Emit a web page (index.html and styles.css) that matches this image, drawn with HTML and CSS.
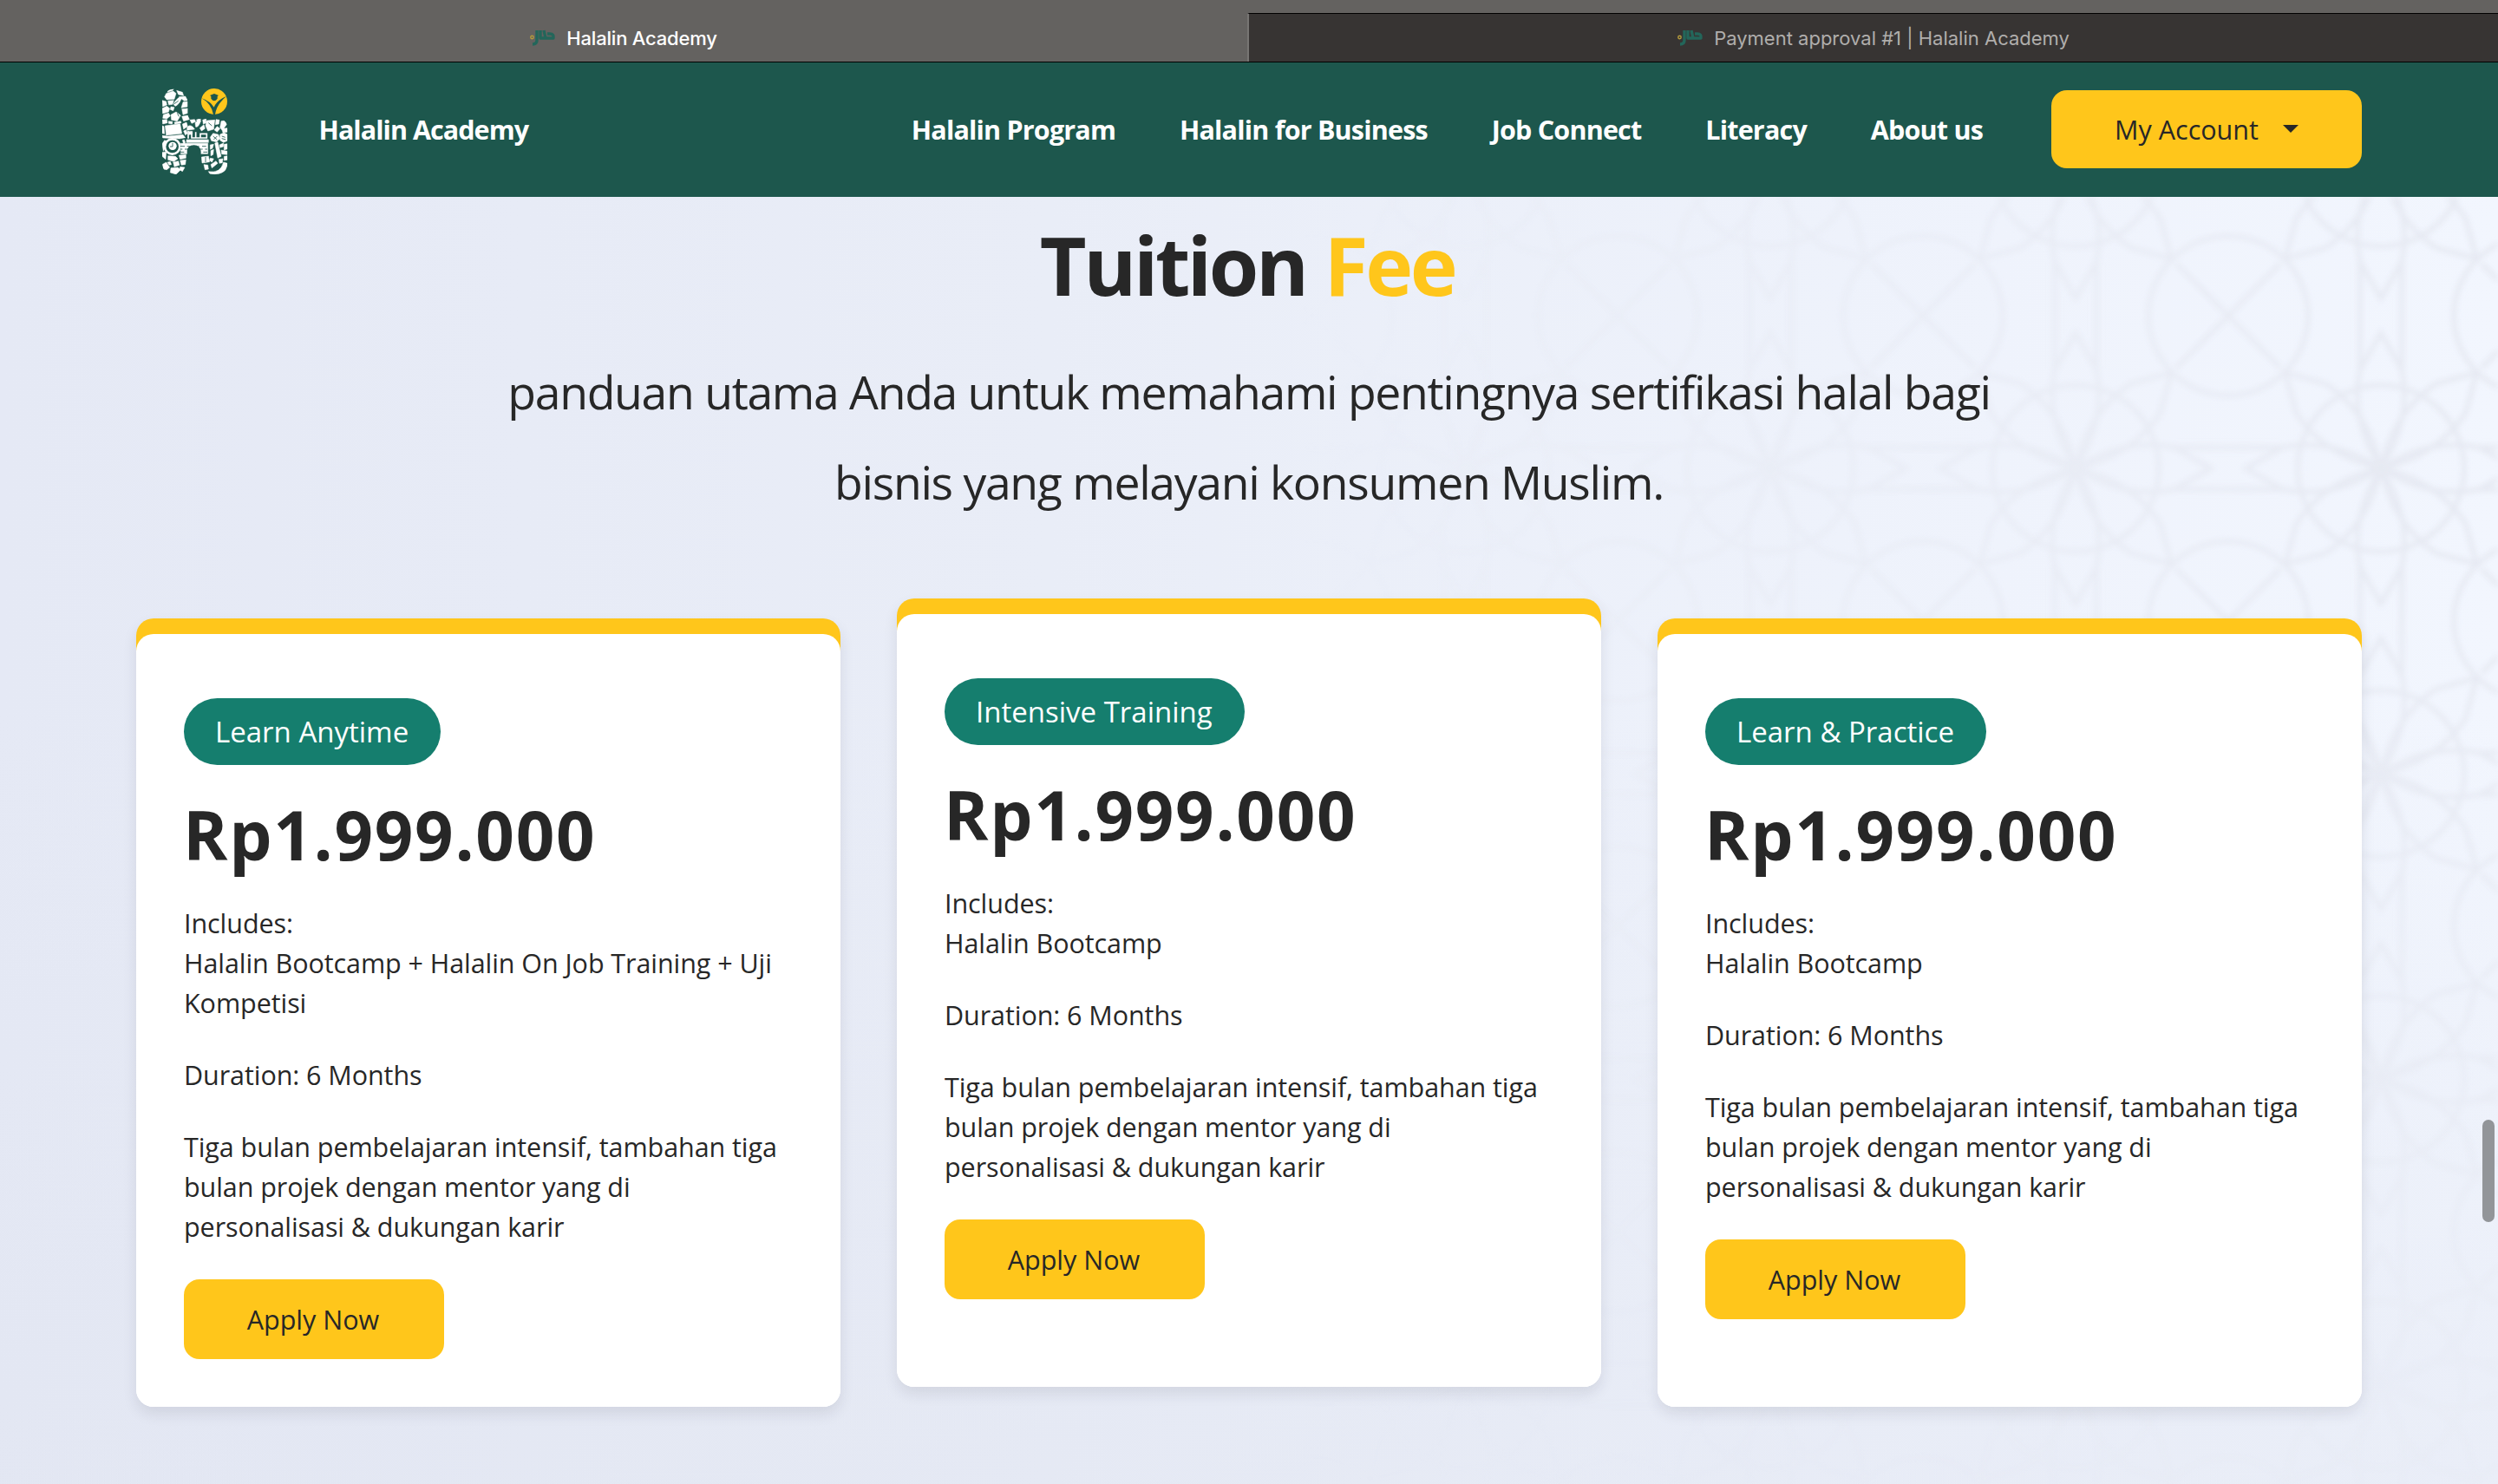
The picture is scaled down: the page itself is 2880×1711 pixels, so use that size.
FILE: index.html
```html
<!DOCTYPE html>
<html lang="id">
<head>
<meta charset="utf-8">
<title>Halalin Academy</title>
<link rel="stylesheet" href="styles.css">
</head>
<body>
<div class="tabs">
  <div class="tab tab-active">
    <svg class="favicon" viewBox="0 0 30 20"><path class="mark" d="M8 1v11q0 5-5 5M12 1v9h15q1-5-4-5h-3M16 1l2 9"/><circle cx="2.5" cy="9" r="1.7"/></svg>
    <span class="tab-title">Halalin Academy</span>
  </div>
  <div class="tab tab-idle">
    <svg class="favicon" viewBox="0 0 30 20"><path class="mark" d="M8 1v11q0 5-5 5M12 1v9h15q1-5-4-5h-3M16 1l2 9"/><circle cx="2.5" cy="9" r="1.7"/></svg>
    <span class="tab-title">Payment approval #1 | Halalin Academy</span>
  </div>
</div>

<header class="header">
  <svg class="logo" viewBox="0 0 300 345">
    <defs>
      <clipPath id="h-shape"><path d="M36 66A44 44 0 0 1 124 66V108Q126 126 146 126H226Q262 126 262 160V276Q262 318 218 318Q172 318 170 280V240Q168 217 146 217Q122 217 122 240V280Q118 318 80 318Q36 318 36 276Z"/></clipPath>
    </defs>
    <g clip-path="url(#h-shape)">
      <g fill="#fff" stroke="#fff" stroke-width="1.5" stroke-linejoin="round">
        <path d="M50 38l24-8 10 8-6 20-26 2-8-10zM56 26l20-3-4 5-18 6zM86 28l20 6 4 12-18-4zM94 50l22-2 8 14-12 2zM36 62l14 4 2 12-14 6zM56 64l20-2-4 14-14 2zM80 66q16-20 24-14-6 20-20 30-14-2-4-16zM108 68l16-2v18l-22 4zM36 90l16-8 10 8-4 12-20 6zM66 84l12 2-4 12-10-4zM40 112l18-6 6 10-12 10-14-2zM66 112l18-10 16 12-12 20-20-4zM104 92l22-2v16l-18 6zM104 118l20-4 6 14-20 6zM36 130l16-2 2 12-16 4zM58 134l14 2-2 8-12-2zM78 138l22-4 2 6-22 4z"/>
        <path d="M46 150l52-7 6 34-54 6zM36 184l20 2 52-5 8 10-20 4-58-3zM36 150l6 2 2 26-8-2zM106 144l14-6 4 14-14 10zM110 168l8-4 6 12-8 6zM122 156q8-12 20-2l6 8-26 4zM132 130l16-2 4 8-14 6zM128 170l12-1v10l-12 2zM150 140q14-14 20-8-8 24-18 22zM176 130l12-4v14l-10 4zM154 130l10-4 6 2-12 8zM166 158l14-12 4 14-12 8zM190 132l28-2-4 32-20 6-8-18zM222 128l12 2-2 14-12 2zM240 134l12-2 8 12-16 22-8-10zM216 164l10-12 10 8-10 12zM242 160l20-2v14l-16 2z"/>
        <path d="M120 198h76v10H120zM202 190l10-14 18 4 6 14-12 12-18-4zM236 180l14-6 12 6v22l-14 6-12-8zM112 198l4 10-6 4-4-12zM100 211h94v36h-94z"/>
        <path d="M36 212l8-12 10 4-14 34zM36 242l14-2-2 26-12-10zM56 254l26 2 8 8-14 10-20-6zM94 252l24-2v12l-20 4zM36 284l14-8 12 18-10 8-12-2zM54 276l10-2 4 10-8 2zM74 276l18-4 4 14-18 6zM98 270l20-2-2 16-14 2zM66 296l24-2 10 8-16 16-20-6zM98 292l16 2-8 14-10-6z"/>
        <path d="M172 258l24-3 4 20-26 4zM202 216l12-2-4 14-8 4zM204 236l10-4-2 18-8 4zM218 210l10-4 12 50-12 6zM234 216l14-6v12l-12 4zM250 214l12-2v18l-12 4zM240 234l22 4v12l-20-2zM180 284l14 2 2 14-12 2zM202 262l12 2-6 12-8-6zM204 284l18-12 6 8-20 16zM232 266l14-2-2 14-10 2zM250 256l12-2v14l-12 2zM196 308q42 8 52-32l14 4v38h-60z"/>
      </g>
      <circle cx="71" cy="222" r="26" fill="none" stroke="#fff" stroke-width="8"/>
      <circle cx="72" cy="220" r="14" fill="#fff"/>
      <path d="M72 210v12h-9M98 221h16M122 221h16M150 221h14M174 221h14M98 231h8M114 231h12M168 231h8M184 231h8M98 241h14M178 241h14M212 186l14 12M214 198l12-12M196 140l12 10M242 186l12 4M242 194l14 4M52 70l6 6M78 74l14-10M88 106l6 12M186 258v18" fill="none" stroke="#1d574d" stroke-width="2.5"/>
      <path d="M126 168v26M138 172v20h14v-20M152 192h16v-14h22v14h-22" fill="none" stroke="#fff" stroke-width="5"/>
    </g>
    <circle cx="216" cy="66" r="45" fill="#ffc61b"/>
    <path d="M173 55Q203 66 215 86Q225 62 258 48Q224 76 219 111H213Q206 74 173 55Z" fill="#1d574d"/>
    <path d="M201 45l15-6 15 6-4 3v8q-11 15-22 0v-8z" fill="#1d574d"/>
  </svg>
  <span class="brand">Halalin Academy</span>
  <nav class="nav">
    <a>Halalin Program</a>
    <a>Halalin for Business</a>
    <a>Job Connect</a>
    <a>Literacy</a>
    <a>About us</a>
  </nav>
  <button class="btn account">My Account<span class="caret"></span></button>
</header>

<main class="page">
  <svg class="pattern" viewBox="0 0 1380 1484">
    <defs>
      <linearGradient id="fade" x1="0" x2="1" y1="0" y2="0"><stop offset="0" stop-color="#000"/><stop offset=".5" stop-color="#777"/><stop offset="1" stop-color="#eee"/></linearGradient>
      <linearGradient id="fade-down" x1="0" x2="0" y1="0" y2="1"><stop offset=".3" stop-color="#000" stop-opacity="0"/><stop offset="1" stop-color="#000" stop-opacity=".85"/></linearGradient>
      <mask id="fade-mask"><rect width="1380" height="1484" fill="url(#fade)"/><rect width="1380" height="1484" fill="url(#fade-down)"/></mask>
      <pattern id="rosettes" width="352" height="352" patternUnits="userSpaceOnUse" x="1069" y="137">
        <g fill="none" stroke="#e4e7f0" stroke-width="5">
          <path id="p" d="M176 176Q140 120 152 62L176 20L200 62Q212 120 176 176"/>
          <use href="#p" transform="rotate(45 176 176)"/><use href="#p" transform="rotate(90 176 176)"/><use href="#p" transform="rotate(135 176 176)"/><use href="#p" transform="rotate(180 176 176)"/><use href="#p" transform="rotate(225 176 176)"/><use href="#p" transform="rotate(270 176 176)"/><use href="#p" transform="rotate(315 176 176)"/>
          <circle cx="176" cy="176" r="96"/>
          <circle cx="0" cy="0" r="92"/><circle cx="352" cy="0" r="92"/><circle cx="0" cy="352" r="92"/><circle cx="352" cy="352" r="92"/>
          <path d="M0 0L60 60M352 0L292 60M0 352L60 292M352 352L292 292M152 0V62M200 0V62M152 290V352M200 290V352M0 152H62M0 200H62M290 152H352M290 200H352"/>
        </g>
      </pattern>
      <filter id="soft"><feGaussianBlur stdDeviation="3"/></filter>
    </defs>
    <g mask="url(#fade-mask)"><rect width="1380" height="1484" fill="url(#rosettes)" filter="url(#soft)"/></g>
  </svg>

  <section class="intro">
    <h1>Tuition <em>Fee</em></h1>
    <p>panduan utama Anda untuk memahami pentingnya sertifikasi halal bagi<br>bisnis yang melayani konsumen Muslim.</p>
  </section>

  <section class="cards">
    <article class="card">
      <div class="card-body">
        <span class="badge">Learn Anytime</span>
        <h2>Rp1.999.000</h2>
        <p>Includes:<br>Halalin Bootcamp + Halalin On Job Training + Uji Kompetisi</p>
        <p>Duration: 6 Months</p>
        <p>Tiga bulan pembelajaran intensif, tambahan tiga bulan projek dengan mentor yang di personalisasi &amp; dukungan karir</p>
        <button class="btn apply">Apply Now</button>
      </div>
    </article>
    <article class="card card-raised">
      <div class="card-body">
        <span class="badge">Intensive Training</span>
        <h2>Rp1.999.000</h2>
        <p>Includes:<br>Halalin Bootcamp</p>
        <p>Duration: 6 Months</p>
        <p>Tiga bulan pembelajaran intensif, tambahan tiga bulan projek dengan mentor yang di personalisasi &amp; dukungan karir</p>
        <button class="btn apply">Apply Now</button>
      </div>
    </article>
    <article class="card">
      <div class="card-body">
        <span class="badge">Learn &amp; Practice</span>
        <h2>Rp1.999.000</h2>
        <p>Includes:<br>Halalin Bootcamp</p>
        <p>Duration: 6 Months</p>
        <p>Tiga bulan pembelajaran intensif, tambahan tiga bulan projek dengan mentor yang di personalisasi &amp; dukungan karir</p>
        <button class="btn apply">Apply Now</button>
      </div>
    </article>
  </section>
  <div class="scroll-thumb"></div>
</main>
</body>
</html>
```
FILE: styles.css
```css
* { box-sizing: border-box; }

body {
  margin: 0;
  height: 1711px;
  display: flex;
  flex-direction: column;
  overflow: hidden;
  font-family: "Open Sans", "Noto Sans", sans-serif;
  color: #272727;
}

/* Browser tabs */
.tabs {
  display: flex;
  height: 72px;
  background: #646260;
  border-bottom: 1px solid #000;
  font-family: Inter, "Liberation Sans", sans-serif;
  font-size: 22px;
}
.tab {
  display: flex;
  align-items: center;
  justify-content: center;
  gap: 12px;
  padding-top: 17px;
}
.tab-active { width: 1438px; color: #fff; font-weight: 500; letter-spacing: -0.2px; }
.tab-idle {
  flex: 1;
  margin-top: 15px;
  padding-top: 1px;
  background: #373433;
  color: #b0aeac;
  border-top: 1px solid #000;
  border-left: 2px solid #777573;
}
.favicon { width: 30px; height: 20px; }
.mark { fill: none; stroke: #23665a; stroke-width: 3.4; stroke-linejoin: round; }
.favicon circle { fill: none; stroke: #b39a3c; stroke-width: 1.4; }

/* Site header */
.header {
  display: flex;
  align-items: center;
  height: 155px;
  padding: 0 157px 2px 175px;
  background: #1d574d;
  color: #fff;
  font-size: 30.5px;
}
.logo { width: 100px; height: 115px; margin-top: 8px; }
.brand { margin-left: 92.5px; font-weight: 700; letter-spacing: -0.95px; }
.nav {
  display: flex;
  gap: 73.8px;
  margin-left: auto;
  font-weight: 700;
  letter-spacing: -0.8px;
}

.btn {
  display: flex;
  align-items: center;
  justify-content: center;
  border: 0;
  padding: 0;
  border-radius: 18px;
  background: #ffc61b;
  color: #272727;
  font: 500 30.5px "Open Sans", "Noto Sans", sans-serif;
}
.account { width: 358px; height: 90px; margin-left: 79px; gap: 28px; }
.caret {
  border: 9px solid transparent;
  border-top-color: #272727;
  border-bottom: 0;
}

/* Page */
.page {
  position: relative;
  flex: 1;
  background:
    linear-gradient(to bottom, rgba(224, 228, 240, 0) 40%, rgba(224, 228, 240, .45)),
    linear-gradient(to right, #e5e9f5, #e9edf7 42%, #eff3fc 80%, #f2f6fe);
}
.pattern {
  position: absolute;
  top: 0;
  right: 0;
  width: 1380px;
  height: 1484px;
}
.intro { position: relative; padding-top: 18px; text-align: center; }
h1 { margin: 0; font-size: 93px; line-height: 120px; letter-spacing: -3.4px; text-indent: -4px; }
h1 em { font-style: normal; color: #ffc61b; }
.intro p {
  margin: 35px 0 0;
  font-size: 53.5px;
  line-height: 104px;
  letter-spacing: -1.3px;
}

/* Pricing cards */
.cards {
  position: relative;
  display: grid;
  grid-template-columns: repeat(3, 1fr);
  gap: 65px;
  margin-top: 105px;
  padding: 0 157px;
}
.card {
  display: flex;
  padding-top: 18px;
  border-radius: 20px;
  background: linear-gradient(#ffc61b 40px, #fff 40px);
  box-shadow: 0 8px 16px rgba(40, 40, 60, .1);
}
.card-raised { transform: translateY(-23px); }
.card-body {
  flex: 1;
  display: flex;
  flex-direction: column;
  align-items: flex-start;
  padding: 74px 53px 55px 55px;
  border-radius: 20px;
  background: #fff;
}
.badge {
  padding: 0 37px 0 36px;
  border-radius: 39px;
  background: #157e6e;
  color: #fff;
  font-size: 33px;
  line-height: 77px;
}
h2 { margin: 30px 0 -8px; font-size: 78px; line-height: 100px; letter-spacing: 1.7px; text-indent: -1px; }
.card p {
  margin: 37px 0 0;
  font-size: 30.5px;
  line-height: 46px;
  letter-spacing: -0.07px;
  text-indent: 0;
}
.apply { width: 300px; height: 92px; margin-top: 38px; padding: 0 2px 1px 0; }

.scroll-thumb {
  position: absolute;
  top: 1064px;
  right: 4px;
  width: 14px;
  height: 118px;
  border-radius: 7px;
  background: #929599;
}
```
